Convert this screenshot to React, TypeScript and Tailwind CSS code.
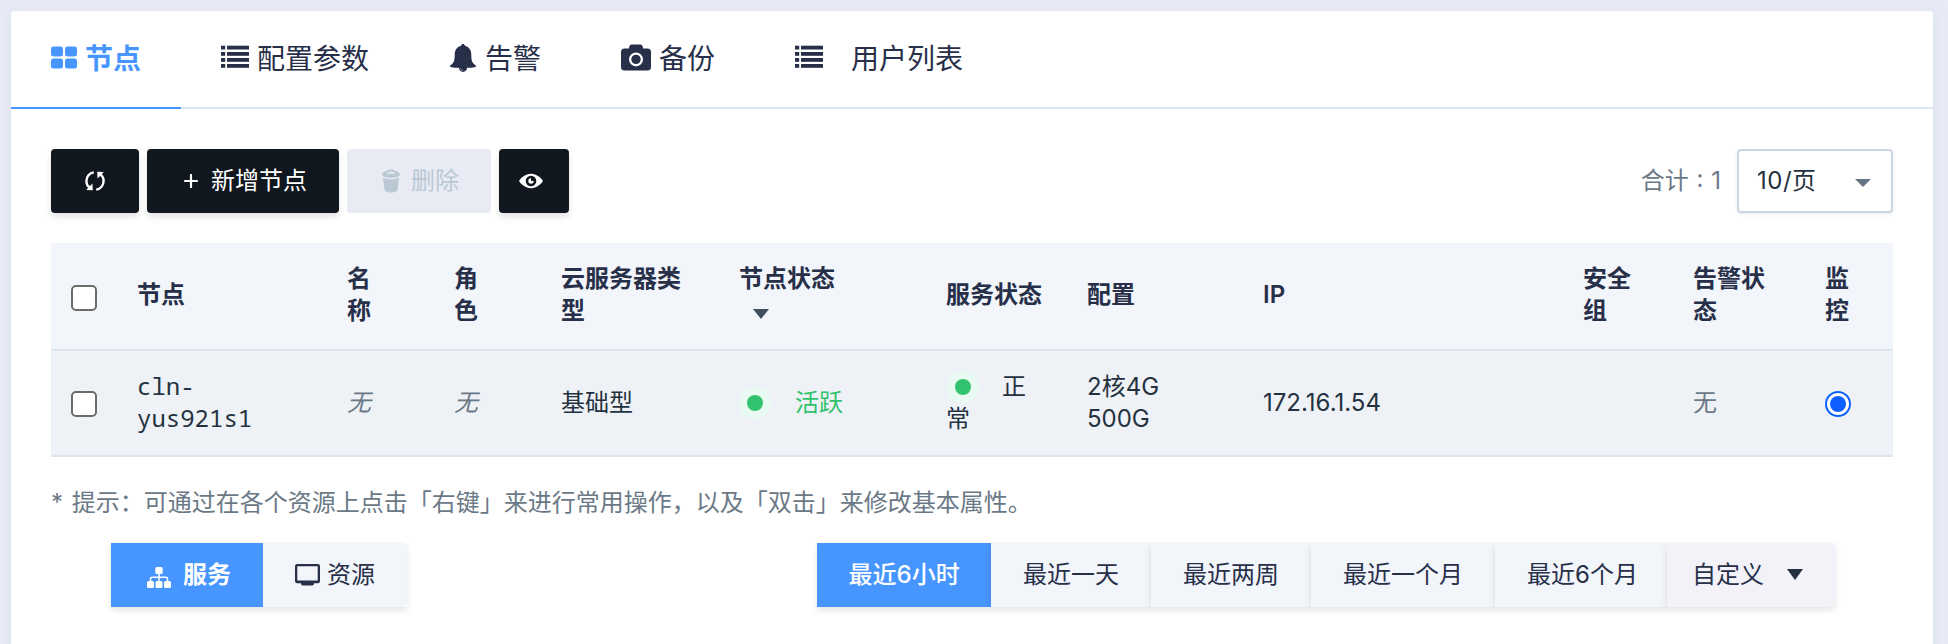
import type { ReactNode } from "react";

type IconProps = { className?: string };

const GridIcon = ({ className }: IconProps) => (
  <svg className={className} width="26" height="23" viewBox="0 0 26 23" fill="currentColor">
    <rect x="0" y="0.5" width="12" height="10" rx="2.4" />
    <rect x="14" y="0.5" width="12" height="10" rx="2.4" />
    <rect x="0" y="12.6" width="12" height="10" rx="2.4" />
    <rect x="14" y="12.6" width="12" height="10" rx="2.4" />
  </svg>
);

const ListIcon = ({ className }: IconProps) => (
  <svg className={className} width="28" height="24" viewBox="0 0 28 24" fill="currentColor">
    {[0.7, 7, 13, 19].map((y) => (
      <g key={y}>
        <rect x="0" y={y} width="4.2" height="3.8" />
        <rect x="6" y={y} width="22" height="3.8" />
      </g>
    ))}
  </svg>
);

const BellIcon = ({ className }: IconProps) => (
  <svg className={className} width="26" height="28" viewBox="0 0 26 28" fill="currentColor">
    <path d="M13 0c-1 0-1.800.7-1.900 1.700C7.600 2.600 5 5.300 4.800 9.500 4.600 14.500 4.600 17.500 2.600 19.600 1.600 20.700 0 21.400 0 22.200c0 .7.600.8 1.600 1 1.800.4 4.500.5 7.300.6.200 2.300 1.900 4.200 4.100 4.200s3.900-1.900 4.100-4.200c2.800-.1 5.500-.2 7.300-.6 1-.2 1.600-.3 1.600-1 0-.8-1.600-1.500-2.600-2.600-2-2.100-2-5.100-2.200-10.100-.2-4.200-2.800-6.900-6.300-7.800C14.800.7 14 0 13 0z" />
    <path d="M10.500 24.200c.2 1.300 1.200 2.200 2.500 2.200" fill="none" stroke="white" strokeWidth="0.6" opacity="0.7" />
  </svg>
);

const CameraIcon = ({ className }: IconProps) => (
  <svg className={className} width="30" height="27" viewBox="0 0 30 27" fill="currentColor">
    <path
      fillRule="evenodd"
      d="M3.500 4.500h4.200L8.600 2C9 .8 9.800.4 11 .4h8c1.200 0 2 .4 2.400 1.600l.9 2.500h4.200A3.500 3.500 0 0 1 30 8v15a3.500 3.500 0 0 1-3.500 3.500h-23A3.500 3.500 0 0 1 0 23V8a3.500 3.500 0 0 1 3.500-3.500zM15 8.400a7 7 0 1 0 0 14 7 7 0 0 0 0-14zm0 2.300a4.700 4.700 0 1 1 0 9.400 4.700 4.700 0 0 1 0-9.400z"
    />
  </svg>
);

const RefreshIcon = () => (
  <svg width="20" height="20" viewBox="0 0 20 20" fill="none" stroke="currentColor" strokeWidth="2.400">
    <path d="M8.800 1.400C4.400 2 1.400 5.600 1.400 9.900c0 3 1.500 5.500 3.800 7" />
    <path d="M11.200 18.600c4.400-.6 7.400-4.200 7.400-8.500 0-3-1.500-5.500-3.800-7" />
    <path d="M1.200 18.900l6.600.4-.4-6.700z" fill="currentColor" stroke="none" />
    <path d="M18.800 1.100l-6.600-.4.4 6.700z" fill="currentColor" stroke="none" />
  </svg>
);

const PlusIcon = () => (
  <svg width="14" height="14" viewBox="0 0 14 14" fill="none" stroke="currentColor" strokeWidth="2.200" strokeLinecap="round">
    <path d="M7 1v12M1 7h12" />
  </svg>
);

const TrashIcon = () => (
  <svg width="18" height="24" viewBox="0 0 18 24" fill="currentColor">
    <path
      fillRule="evenodd"
      d="M9 .4c2 0 3.600.7 4.700 1.600C16.200 2.800 18 4.100 18 5.500 18 7.400 14 8.700 9 8.700S0 7.400 0 5.500C0 4.100 1.800 2.800 4.300 2 5.400 1.100 7 .4 9 .4zM9 2.500c-2 0-3.300.8-4.300 2.200.9.800 2.400-.2 4.300-.2s3.400 1 4.300.2C12.300 3.300 11 2.500 9 2.500z"
    />
    <path d="M1 8.500c1.800 1.200 4.700 1.800 8 1.800s6.200-.6 8-1.800L15.600 20.500c-.2 1.900-3 3-6.600 3s-6.400-1.100-6.600-3z" />
  </svg>
);

const EyeIcon = () => (
  <svg width="24" height="16" viewBox="0 0 24 16">
    <path d="M12 .8C5.400.8.600 6.600.100 8c.5 1.400 5.300 7.200 11.900 7.200S23.400 9.400 23.900 8C23.400 6.600 18.600.8 12 .8z" fill="currentColor" />
    <circle cx="12" cy="8" r="5.300" fill="#10171e" />
    <path d="M12 8V5.300A2.700 2.700 0 1 0 14.700 8z" fill="currentColor" />
  </svg>
);

const SitemapIcon = () => (
  <svg width="24" height="21" viewBox="0 0 24 21" fill="currentColor">
    <rect x="8.300" y="0" width="7.400" height="7" rx="1.500" />
    <rect x="0" y="14" width="7" height="7" rx="1.500" />
    <rect x="8.500" y="14" width="7" height="7" rx="1.500" />
    <rect x="17" y="14" width="7" height="7" rx="1.500" />
    <path d="M12 6v9M3.500 15v-3.200c0-1 .4-1.500 1.500-1.500h14c1.100 0 1.500.5 1.500 1.500V15" fill="none" stroke="currentColor" strokeWidth="1.500" />
  </svg>
);

const MonitorIcon = () => (
  <svg width="25" height="22" viewBox="0 0 25 22" fill="currentColor">
    <path
      fillRule="evenodd"
      d="M2.500 0h20A2.300 2.300 0 0 1 25 2.300V17a2.300 2.300 0 0 1-2.500 2.300H19c0 1.200-.4 2.200-1.500 2.200h-10C6.400 21.500 6 20.500 6 19.300H2.500A2.300 2.300 0 0 1 0 17V2.300A2.300 2.300 0 0 1 2.500 0zM2.300 2.200v14.300h20.400V2.200z"
    />
  </svg>
);

const Caret = ({ w, h, className }: { w: number; h: number; className?: string }) => (
  <svg className={className} width={w} height={h} viewBox="0 0 16 10" preserveAspectRatio="none" fill="currentColor">
    <path d="M0 0h16L8 10z" />
  </svg>
);

const Tab = ({ icon, label, active = false, gap }: { icon: ReactNode; label: string; active?: boolean; gap: string }) => (
  <button
    className={`flex h-[98px] items-center border-b-2 px-10 text-[28px] leading-8 ${gap} ${
      active ? "border-[#4795ff] font-semibold text-[#4795ff]" : "border-transparent text-[#272f49]"
    }`}
  >
    {icon}
    <span className="w-max">{label}</span>
  </button>
);

const Checkbox = ({ className }: IconProps) => (
  <span className={`block size-[26px] rounded-[5px] border-2 border-[#6b6b6b] bg-white ${className}`} />
);

const Dot = () => (
  <span className="flex size-8 shrink-0 items-center justify-center rounded-full bg-[#e8faf1]">
    <span className="size-4 rounded-full bg-[#31c26d]" />
  </span>
);

const ROW = "grid grid-cols-[66px_210px_107px_107px_178px_207px_141px_176px_320px_110px_132px_49px] items-center pl-5";

const HEADERS: string[][] = [
  ["节点"],
  ["名", "称"],
  ["角", "色"],
  ["云服务器类", "型"],
  ["节点状态"],
  ["服务状态"],
  ["配置"],
  ["IP"],
  ["安全", "组"],
  ["告警状", "态"],
  ["监", "控"],
];

const RANGES = ["最近一天", "最近两周", "最近一个月", "最近6个月"];

const DARK = "flex h-16 items-center rounded-[4px] bg-[#10171e] text-white shadow-[0_4px_6px_rgba(16,23,30,0.12)]";
const SEG_SHADOW = "shadow-[0_3px_6px_rgba(39,47,73,0.13)]";

export default function App() {
  return (
    <div className="h-[644px] overflow-hidden bg-[#e8ebf6] pt-[11px] pr-[15px] pl-[11px] font-['Inter','Noto_Sans_CJK_SC',sans-serif] text-2xl leading-8 text-[#243240]">
      <main className="h-[700px] rounded-[4px] bg-white shadow-[0_4px_12px_rgba(180,198,220,0.35)]">
        <nav className="flex h-[98px] border-b-2 border-[#dde6ee]">
          <Tab active gap="gap-2" icon={<GridIcon className="-mt-1" />} label="节点" />
          <Tab gap="gap-2" icon={<ListIcon className="-mt-1" />} label="配置参数" />
          <Tab gap="gap-[9px]" icon={<BellIcon className="-mt-0.5 ml-px" />} label="告警" />
          <Tab gap="gap-2" icon={<CameraIcon className="-mt-1" />} label="备份" />
          <Tab gap="gap-7" icon={<ListIcon className="-mt-1" />} label="用户列表" />
        </nav>

        <section className="px-10 pt-10">
          <div className="flex items-center justify-between">
            <div className="flex gap-2">
              <button className={`${DARK} w-[88px] justify-center`}>
                <RefreshIcon />
              </button>
              <button className={`${DARK} w-48 gap-[13px] pl-[37px]`}>
                <PlusIcon />
                <span>新增节点</span>
              </button>
              <button className="flex h-16 w-36 items-center gap-[11px] rounded-[4px] bg-[#e8ebf4] pl-[35px] text-[#bac8d4]" disabled>
                <TrashIcon />
                <span>删除</span>
              </button>
              <button className={`${DARK} w-[70px] pl-5`}>
                <EyeIcon />
              </button>
            </div>
            <div className="flex items-center gap-4">
              <span className="[word-spacing:1px] text-[#6b7987]">合计 : 1</span>
              <button className="flex h-16 w-[156px] items-center justify-between rounded-[4px] border-2 border-[#cbd6e2] bg-white pr-5 pl-[18px] shadow-[0_2px_4px_rgba(39,47,73,0.07)]">
                <span className="tracking-[0.5px]">10/页</span>
                <Caret w={16} h={8} className="mt-1 text-[#667482]" />
              </button>
            </div>
          </div>

          <div className="mt-[30px]">
            <div className={`${ROW} h-[108px] border-b-2 border-[#dce5eb] bg-[#f2f5f9] pb-0.5 font-semibold text-[#272f49]`}>
              <Checkbox className="mt-1.5" />
              {HEADERS.map((lines) => (
                <div key={lines.join("")}>
                  {lines.map((line) => (
                    <div key={line}>{line}</div>
                  ))}
                  {lines[0] === "节点状态" && (
                    <div className="flex h-8 items-center pl-3.5">
                      <Caret w={16} h={10} className="mt-1.5 text-[#3f4e5d]" />
                    </div>
                  )}
                </div>
              ))}
            </div>
            <div className={`${ROW} h-[106px] border-b-2 border-[#dce5eb] bg-[#eef1f6]`}>
              <Checkbox className="mt-0.5" />
              <div className="pb-0.5 font-['Noto_Sans_Mono','Liberation_Mono',monospace]">
                cln-
                <br />
                yus921s1
              </div>
              <div className="text-[#6b7987] italic">无</div>
              <div className="text-[#6b7987] italic">无</div>
              <div>基础型</div>
              <div className="flex items-center gap-6 text-[#31c26d]">
                <Dot />
                活跃
              </div>
              <div>
                <div className="ml-px flex h-8 items-center gap-[23px]">
                  <Dot />正
                </div>
                <div>常</div>
              </div>
              <div>
                2核4G
                <br />
                500G
              </div>
              <div>172.16.1.54</div>
              <div />
              <div className="text-[#6b7987]">无</div>
              <span className="mt-0.5 flex size-[26px] items-center justify-center rounded-full border-2 border-[#0d5fff] bg-white">
                <span className="size-4 rounded-full bg-[#0d5fff]" />
              </span>
            </div>
          </div>

          <p className="mt-[30px] [word-spacing:2px] text-[#6b7987]">* 提示：可通过在各个资源上点击「右键」来进行常用操作，以及「双击」来修改基本属性。</p>

          <div className="mt-6 flex justify-between pr-[58px] pl-[60px] text-[#272f49]">
            <div className={`flex h-16 ${SEG_SHADOW}`}>
              <button className="flex w-[152px] items-center gap-3 bg-[#4795ff] pl-9 font-semibold text-white">
                <span className="mt-1">
                  <SitemapIcon />
                </span>
                <span>服务</span>
              </button>
              <button className="flex w-36 items-center gap-[7px] rounded-r-[4px] bg-[#f2f5f9] pl-8">
                <MonitorIcon />
                <span>资源</span>
              </button>
            </div>
            <div className="flex h-16">
              <button className={`w-[174px] bg-[#4795ff] font-medium text-white ${SEG_SHADOW}`}>最近6小时</button>
              {RANGES.map((range) => (
                <button key={range} className={`bg-[#f2f5f9] pl-8 ${range === "最近6个月" ? "pr-[29px]" : "pr-8"} ${SEG_SHADOW}`}>
                  {range}
                </button>
              ))}
              <button className={`flex w-[168px] items-center justify-between rounded-r-[4px] bg-[#f2f2f8] pr-8 pl-[25px] ${SEG_SHADOW}`}>
                <span>自定义</span>
                <Caret w={16} h={11} className="-mt-0.5 text-[#243240]" />
              </button>
            </div>
          </div>
        </section>
      </main>
    </div>
  );
}
